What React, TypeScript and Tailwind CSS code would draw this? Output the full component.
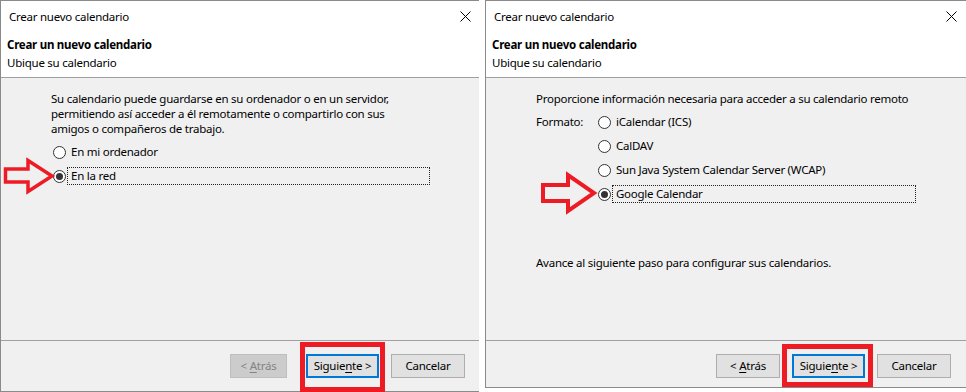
import type { ReactNode } from "react";

const FONT = "font-['Segoe_UI','Noto_Sans',sans-serif]";

function CloseIcon() {
  return (
    <svg width="11" height="11" viewBox="0 0 11 11" aria-hidden="true">
      <path d="M0.5 0.5 L10.5 10.5 M10.5 0.5 L0.5 10.5" stroke="#000" strokeWidth="1" fill="none" />
    </svg>
  );
}

function Radio({ checked }: { checked?: boolean }) {
  return (
    <span className="flex h-[13px] w-[13px] shrink-0 items-center justify-center rounded-full border border-[#333] bg-white">
      {checked ? <span className="h-[7px] w-[7px] rounded-full bg-[#333]" /> : null}
    </span>
  );
}

function RadioRow({ label, checked, width }: { label: string; checked?: boolean; width: string }) {
  return (
    <div className="flex h-[18px] items-center gap-px">
      <Radio checked={checked} />
      <span
        className={`flex h-[18px] items-center pl-[3px] ${width} ${
          checked ? "border border-dotted border-[#222]" : "border border-transparent"
        }`}
      >
        {label}
      </span>
    </div>
  );
}

function Arrow({ big }: { big?: boolean }) {
  if (big) {
    return (
      <svg width="60" height="44" viewBox="0 0 60 44" aria-hidden="true">
        <polygon
          points="4,14 29,14 29,4 55,22 29,40 29,30 4,30"
          fill="none"
          stroke="#ed1c24"
          strokeWidth="4"
        />
      </svg>
    );
  }
  return (
    <svg width="54" height="38" viewBox="0 0 54 38" aria-hidden="true">
      <polygon
        points="3.5,12 26,12 26,3.5 50,19 26,34.5 26,25 3.5,25"
        fill="none"
        stroke="#ed1c24"
        strokeWidth="3.5"
      />
    </svg>
  );
}

function Btn({
  children,
  width,
  disabled,
  primary,
}: {
  children: ReactNode;
  width: string;
  disabled?: boolean;
  primary?: boolean;
}) {
  const tone = disabled
    ? "border border-[#bfbfbf] bg-[#cccccc] text-[#838383]"
    : primary
      ? "border-2 border-[#0078d7] bg-[#e1e1e1] text-black"
      : "border border-[#adadad] bg-[#e1e1e1] text-black";
  return (
    <div className={`flex h-[24px] items-center justify-center ${width} ${tone}`}>{children}</div>
  );
}

function DialogTop({ pr }: { pr: string }) {
  return (
    <>
      <div className={`flex h-[31px] items-center justify-between bg-white pl-[8px] ${pr}`}>
        <span>Crear nuevo calendario</span>
        <CloseIcon />
      </div>
      <div className="h-[46px] border-b border-[#a0a0a0] bg-white pl-[6px] pt-[4px]">
        <p className="font-bold leading-[18px]">Crear un nuevo calendario</p>
        <p className="leading-[18px]">Ubique su calendario</p>
      </div>
    </>
  );
}

export default function App() {
  return (
    <div className={`flex h-[392px] w-[966px] bg-white text-[11.5px] tracking-[-0.25px] text-black ${FONT}`}>
      {/* left dialog */}
      <div className="flex h-[392px] w-[479px] flex-col border-b border-l border-t border-[#8a8a8a]">
        <DialogTop pr="pr-[8px]" />
        <div className="relative h-[263px] border-b border-[#a0a0a0] bg-[#f0f0f0] pl-[50px] pt-[13px]">
          <p className="leading-[15px]">
            Su calendario puede guardarse en su ordenador o en un servidor,
            <br />
            permitiendo así acceder a él remotamente o compartirlo con sus
            <br />
            amigos o compañeros de trabajo.
          </p>
          <div className="mt-[7px] flex flex-col gap-[6px] pl-[2px]">
            <RadioRow label="En mi ordenador" width="w-[363px]" />
            <RadioRow label="En la red" checked width="w-[363px]" />
          </div>
          <div className="absolute left-[1px] top-[79px]">
            <Arrow />
          </div>
        </div>
        <div className="flex flex-1 items-start justify-end bg-[#f0f0f0] pr-[14px] pt-[13px]">
          <Btn width="w-[57px]" disabled>
            &lt;&nbsp;<span className="underline underline-offset-2">A</span>trás
          </Btn>
          <div className="relative ml-[19px]">
            <Btn width="w-[73px]" primary>
              Siguie<span className="underline underline-offset-2">n</span>te &gt;
            </Btn>
            <div className="absolute -bottom-[14px] -left-[6px] -right-[6px] -top-[12px] border-[5px] border-[#ed1c24]" />
          </div>
          <div className="ml-[12px]">
            <Btn width="w-[74px]">Cancelar</Btn>
          </div>
        </div>
      </div>

      {/* right dialog */}
      <div className="ml-[6px] flex h-[388px] w-[481px] flex-col border-b border-l border-t border-[#8a8a8a]">
        <DialogTop pr="pr-[9px]" />
        <div className="relative h-[263px] border-b border-[#a0a0a0] bg-[#f0f0f0] pl-[50px] pt-[13px]">
          <p className="leading-[15px]">Proporcione información necesaria para acceder a su calendario remoto</p>
          <div className="mt-[7px] flex">
            <span className="flex h-[18px] w-[62px] items-center">Formato:</span>
            <div className="flex flex-col gap-[6px]">
              <RadioRow label="iCalendar (ICS)" width="w-[304px]" />
              <RadioRow label="CalDAV" width="w-[304px]" />
              <RadioRow label="Sun Java System Calendar Server (WCAP)" width="w-[304px]" />
              <RadioRow label="Google Calendar" checked width="w-[304px]" />
            </div>
          </div>
          <p className="mt-[52px] leading-[15px]">Avance al siguiente paso para configurar sus calendarios.</p>
          <div className="absolute left-[53px] top-[93px]">
            <Arrow big />
          </div>
        </div>
        <div className="flex flex-1 items-start justify-end bg-[#f0f0f0] pr-[15px] pt-[13px]">
          <Btn width="w-[64px]">
            &lt;&nbsp;<span className="underline underline-offset-2">A</span>trás
          </Btn>
          <div className="relative ml-[12px]">
            <Btn width="w-[73px]" primary>
              Siguie<span className="underline underline-offset-2">n</span>te &gt;
            </Btn>
            <div className="absolute -bottom-[9px] -left-[10px] -right-[8px] -top-[10px] border-[5px] border-[#ed1c24]" />
          </div>
          <div className="ml-[12px]">
            <Btn width="w-[74px]">Cancelar</Btn>
          </div>
        </div>
      </div>
    </div>
  );
}
